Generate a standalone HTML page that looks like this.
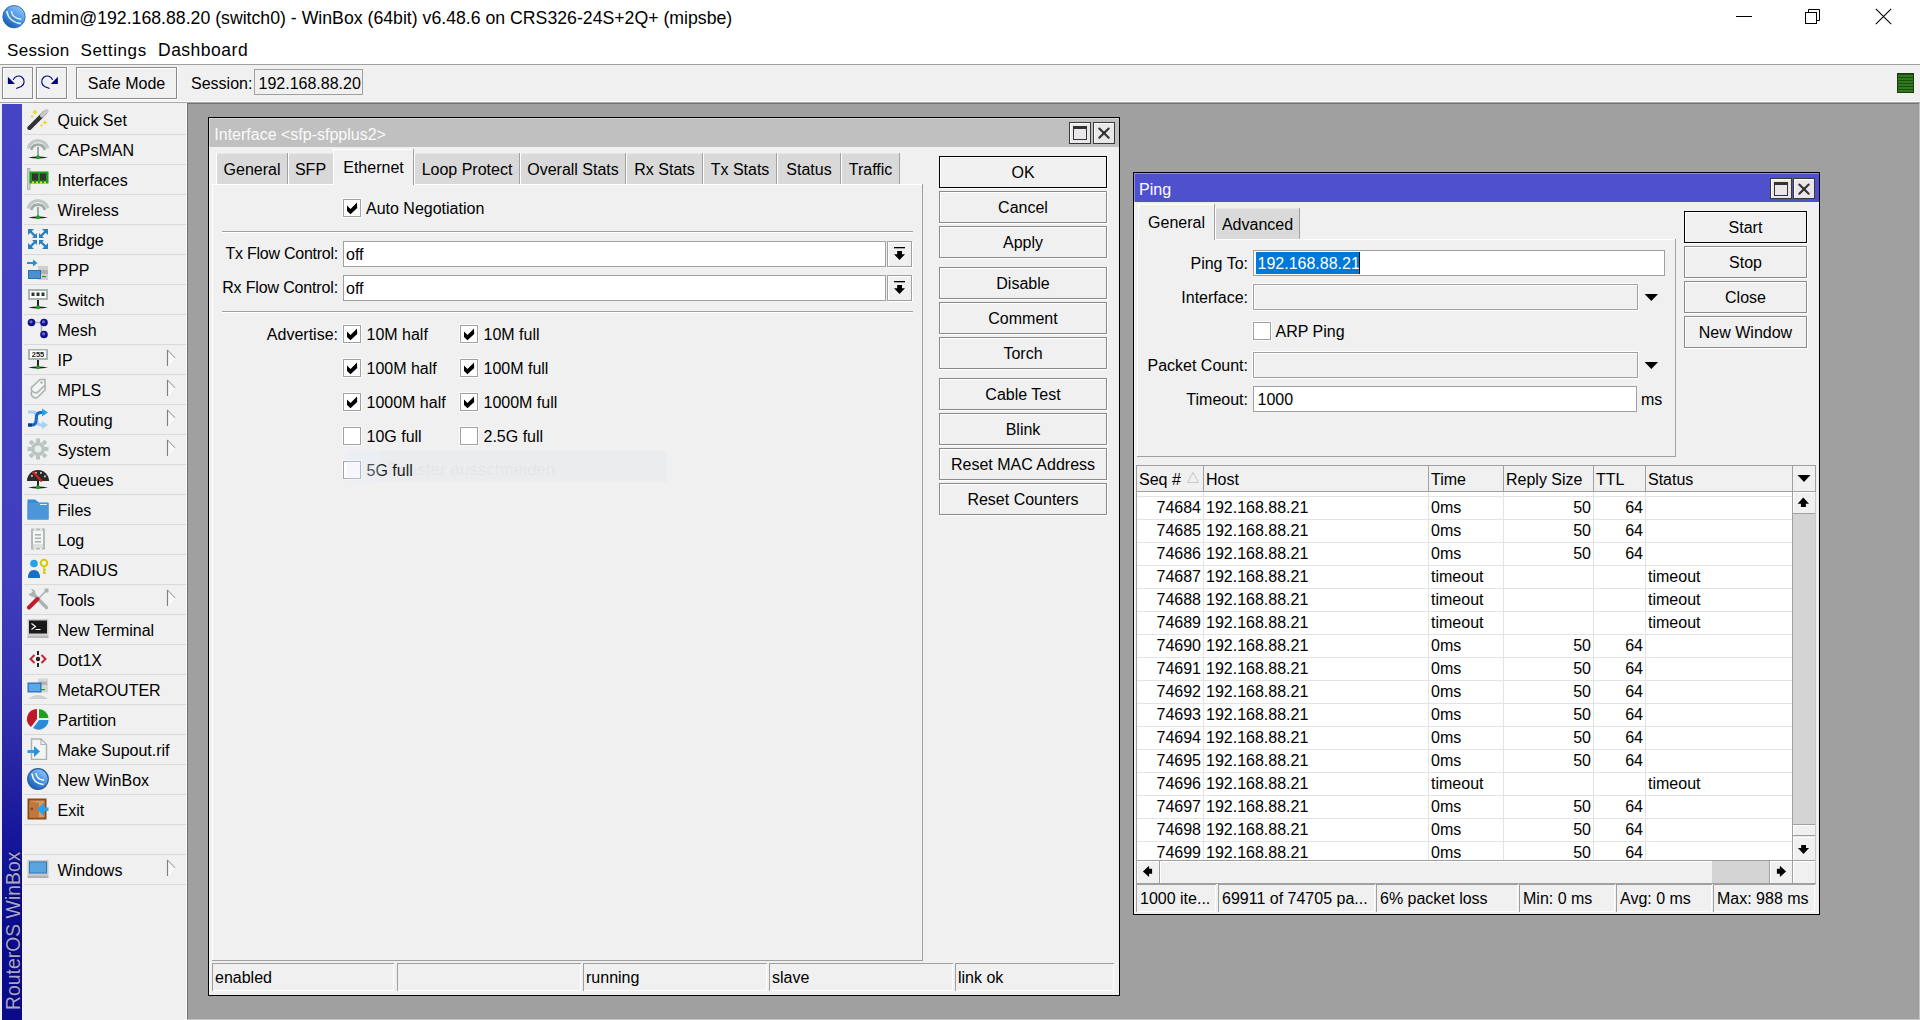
<!DOCTYPE html><html><head><meta charset="utf-8"><style>
html,body{margin:0;padding:0;}
body{width:1920px;height:1020px;position:relative;overflow:hidden;background:#f0f0f0;font-family:"Liberation Sans",sans-serif;}
.t{position:absolute;white-space:pre;font-family:"Liberation Sans",sans-serif;}
.r{position:absolute;}
</style></head><body>
<div class="r" style="left:0px;top:0px;width:1920px;height:64px;background:#fff"></div>
<div class="r" style="left:0px;top:64px;width:1920px;height:1px;background:#a0a0a0"></div>
<svg class="r" style="left:2px;top:5px;" width="25" height="25" viewBox="0 0 25 25"><defs><linearGradient id="lg" x1="0.8" y1="0.1" x2="0.2" y2="0.9"><stop offset="0" stop-color="#8ac2fa"/><stop offset="0.5" stop-color="#4a92e0"/><stop offset="1" stop-color="#1660b8"/></linearGradient></defs>
<circle cx="12" cy="11.7" r="11.2" fill="url(#lg)" stroke="#2a5c9c" stroke-width="0.8"/>
<path d="M4.8 6 Q6.5 17 18.8 18.6" stroke="#fff" stroke-width="1.6" fill="none" opacity="0.85"/>
<path d="M9.4 6 Q10.2 13.5 19.4 14.2" stroke="#fff" stroke-width="1.5" fill="none" opacity="0.8"/></svg>
<div class="t" style="left:31px;top:10.22px;font-size:17.7px;line-height:17.7px;color:#000;">admin@192.168.88.20 (switch0) - WinBox (64bit) v6.48.6 on CRS326-24S+2Q+ (mipsbe)</div>
<div class="r" style="left:1736px;top:16px;width:16px;height:1px;background:#000"></div>
<svg class="r" style="left:1804px;top:8px;" width="18" height="18" viewBox="0 0 18 18"><rect x="1.5" y="4.5" width="11" height="11" fill="none" stroke="#000" stroke-width="1"/><path d="M4.5 4.5 V1.5 H15.5 V12.5 H12.5" fill="none" stroke="#000" stroke-width="1"/></svg>
<svg class="r" style="left:1875px;top:8px;" width="17" height="17" viewBox="0 0 17 17"><path d="M0.8 0.8 L16.2 16.2 M16.2 0.8 L0.8 16.2" stroke="#000" stroke-width="1.1"/></svg>
<div class="t" style="left:7px;top:42.11px;font-size:17px;line-height:17px;color:#000;letter-spacing:0.3px">Session</div>
<div class="t" style="left:80.5px;top:42.11px;font-size:17px;line-height:17px;color:#000;letter-spacing:0.6px">Settings</div>
<div class="t" style="left:158px;top:41.69px;font-size:17.5px;line-height:17.5px;color:#000;letter-spacing:0.5px">Dashboard</div>
<div class="r" style="left:0px;top:65px;width:1920px;height:36px;background:#f0f0f0"></div>
<div class="r" style="left:0px;top:101px;width:1920px;height:1px;background:#fafafa"></div>
<div class="r" style="left:0px;top:102px;width:1920px;height:1px;background:#a8a8a8"></div>
<div class="r" style="left:2px;top:67px;width:32px;height:33px;background:#fff"></div>
<div class="r" style="left:2px;top:67px;width:31px;height:32px;background:#f0f0f0;border:1px solid #8a8a8a;box-sizing:border-box;box-shadow:inset 1px 1px 0 #fff"></div>
<div class="t" style="left:2px;width:31px;top:75.96px;font-size:16px;line-height:16px;color:#000;text-align:center;"></div>
<div class="r" style="left:36px;top:67px;width:32px;height:33px;background:#fff"></div>
<div class="r" style="left:36px;top:67px;width:31px;height:32px;background:#f0f0f0;border:1px solid #8a8a8a;box-sizing:border-box;box-shadow:inset 1px 1px 0 #fff"></div>
<div class="t" style="left:36px;width:31px;top:75.96px;font-size:16px;line-height:16px;color:#000;text-align:center;"></div>
<svg class="r" style="left:2px;top:67px;" width="31" height="32" viewBox="0 0 31 32"><path d="M5.9 9.8 V16.9 H13 Z" fill="#000080"/><path d="M11.2 12.9 A5.6 5.6 0 1 1 19.3 19.5 L14.2 21.5" stroke="#000080" stroke-width="1.1" fill="none"/></svg>
<svg class="r" style="left:36px;top:67px;" width="31" height="32" viewBox="0 0 31 32"><path d="M21.9 9.8 V16.9 H14.8 Z" fill="#000080"/><path d="M16.6 12.9 A5.6 5.6 0 1 0 8.5 19.5 L13.6 21.5" stroke="#000080" stroke-width="1.1" fill="none"/></svg>
<div class="r" style="left:76px;top:67px;width:102px;height:33px;background:#fff"></div>
<div class="r" style="left:76px;top:67px;width:101px;height:32px;background:#f0f0f0;border:1px solid #8a8a8a;box-sizing:border-box;box-shadow:inset 1px 1px 0 #fff"></div>
<div class="t" style="left:76px;width:101px;top:76.16px;font-size:16px;line-height:16px;color:#000;text-align:center;">Safe Mode</div>
<div class="t" style="left:191px;top:76.16px;font-size:16px;line-height:16px;color:#000;">Session:</div>
<div class="r" style="left:254px;top:69px;width:109px;height:26px;border:1px solid #a0a0a0;box-sizing:border-box;background:#f0f0f0"></div>
<div class="t" style="left:258.5px;top:76.16px;font-size:16px;line-height:16px;color:#000;">192.168.88.20</div>
<svg class="r" style="left:1897px;top:73px;" width="17" height="20" viewBox="0 0 17 20"><rect width="17" height="20" fill="#2f7a1c"/><rect x="0" y="1" width="17" height="1" fill="#1d4d10"/><rect x="0" y="4" width="17" height="1" fill="#1d4d10"/><rect x="0" y="7" width="17" height="1" fill="#1d4d10"/><rect x="0" y="10" width="17" height="1" fill="#1d4d10"/><rect x="0" y="13" width="17" height="1" fill="#1d4d10"/><rect x="0" y="16" width="17" height="1" fill="#1d4d10"/><rect x="0" y="19" width="17" height="1" fill="#1d4d10"/><rect x="0.5" y="0.5" width="16" height="19" fill="none" stroke="#1a3d0c"/></svg>
<div class="r" style="left:0px;top:103px;width:187px;height:917px;background:#f0f0f0"></div>
<div class="r" style="left:186px;top:103px;width:1px;height:917px;background:#fbfbfb"></div>
<div class="r" style="left:2px;top:104px;width:20px;height:916px;background:linear-gradient(to bottom,#4444c4 0%,#3e3ebe 52%,#3434b2 63%,#2828a6 71%,#16169a 80%,#0c0c8e 90%,#0a0a8a 100%)"></div>
<div class="t" style="left:-72px;top:915px;width:170px;height:20px;font-size:19.4px;line-height:20px;color:#a6a6cc;text-shadow:1px 1px 1px #00004a;transform:rotate(-90deg);transform-origin:center;text-align:left">RouterOS WinBox</div>
<div class="r" style="left:24px;top:134px;width:162px;height:1px;background:#d9d9d9"></div>
<svg class="r" style="left:27px;top:108px;" width="22" height="22" viewBox="0 0 22 22"><path d="M2.5 20 L18 4.5" stroke="#333" stroke-width="4.4" stroke-linecap="round"/>
<path d="M15 7.5 L19.5 3" stroke="#c8c8c8" stroke-width="4" stroke-linecap="round"/>
<path d="M8 1 L9 3.2 L11.3 4 L9 4.8 L8 7 L7 4.8 L4.7 4 L7 3.2 Z" fill="#e6d81a"/>
<path d="M18 12 L18.8 13.8 L20.8 14.5 L18.8 15.2 L18 17 L17.2 15.2 L15.2 14.5 L17.2 13.8 Z" fill="#e6d81a"/>
<rect x="4" y="7.5" width="2" height="2" fill="#e6d81a"/><rect x="13.5" y="16.5" width="2" height="2" fill="#e6d81a"/></svg>
<div class="t" style="left:57.5px;top:113.46px;font-size:16px;line-height:16px;color:#000;">Quick Set</div>
<div class="r" style="left:24px;top:164px;width:162px;height:1px;background:#d9d9d9"></div>
<svg class="r" style="left:27px;top:138px;" width="22" height="22" viewBox="0 0 22 22"><path d="M1.2 10.5 A10 10 0 0 1 20.8 10.5" stroke="#c0c8c6" stroke-width="3.2" fill="none"/>
<path d="M4.2 12 A7 7 0 0 1 17.8 12" stroke="#9eaaa6" stroke-width="2.6" fill="none"/>
<rect x="10" y="9" width="2" height="10" fill="#9aa8a4"/>
<path d="M1 19.5 Q11 17.5 21 19.5 Q11 21.5 1 19.5Z" fill="#222"/>
<circle cx="11" cy="19.3" r="2" fill="#1aa01a"/></svg>
<div class="t" style="left:57.5px;top:143.46px;font-size:16px;line-height:16px;color:#000;">CAPsMAN</div>
<div class="r" style="left:24px;top:194px;width:162px;height:1px;background:#d9d9d9"></div>
<svg class="r" style="left:27px;top:168px;" width="22" height="22" viewBox="0 0 22 22"><rect x="0.5" y="0.5" width="2.5" height="21" fill="#c8d0cc" stroke="#a0aaa6" stroke-width="0.8"/>
<rect x="2.5" y="3.5" width="19" height="12" fill="#1e9a1e"/>
<rect x="5" y="5.5" width="6" height="7" fill="#333"/><rect x="13" y="5.5" width="6" height="7" fill="#333"/>
<rect x="5" y="13.5" width="2" height="2" fill="#f0e020"/><rect x="9" y="13.5" width="2" height="2" fill="#f0e020"/><rect x="13" y="13.5" width="2" height="2" fill="#f0e020"/><rect x="17" y="13.5" width="2" height="2" fill="#f0e020"/></svg>
<div class="t" style="left:57.5px;top:173.46px;font-size:16px;line-height:16px;color:#000;">Interfaces</div>
<div class="r" style="left:24px;top:224px;width:162px;height:1px;background:#d9d9d9"></div>
<svg class="r" style="left:27px;top:198px;" width="22" height="22" viewBox="0 0 22 22"><path d="M1.2 10.5 A10 10 0 0 1 20.8 10.5" stroke="#c0c8c6" stroke-width="3.2" fill="none"/>
<path d="M4.2 12 A7 7 0 0 1 17.8 12" stroke="#9eaaa6" stroke-width="2.6" fill="none"/>
<rect x="10" y="9" width="2" height="10" fill="#9aa8a4"/>
<path d="M1 19.5 Q11 17.5 21 19.5 Q11 21.5 1 19.5Z" fill="#222"/>
<circle cx="11" cy="19.3" r="2" fill="#1aa01a"/></svg>
<div class="t" style="left:57.5px;top:203.46px;font-size:16px;line-height:16px;color:#000;">Wireless</div>
<div class="r" style="left:24px;top:254px;width:162px;height:1px;background:#d9d9d9"></div>
<svg class="r" style="left:27px;top:228px;" width="22" height="22" viewBox="0 0 22 22"><g stroke="#2a7fc0" stroke-width="2.4" fill="none"><path d="M2 2 L9 9"/><path d="M20 2 L13 9"/><path d="M2 20 L9 13"/><path d="M20 20 L13 13"/></g>
<g fill="#2a7fc0"><path d="M1 1 H7 L1 7Z"/><path d="M21 1 V7 L15 1Z"/><path d="M10 10 H5 L10 5Z"/><path d="M12 10 V5 L17 10Z"/><path d="M10 12 V17 L5 12Z"/><path d="M12 12 H17 L12 17Z"/><path d="M1 21 V15 L7 21Z"/><path d="M21 21 H15 L21 15Z"/></g></svg>
<div class="t" style="left:57.5px;top:233.46px;font-size:16px;line-height:16px;color:#000;">Bridge</div>
<div class="r" style="left:24px;top:284px;width:162px;height:1px;background:#d9d9d9"></div>
<svg class="r" style="left:27px;top:258px;" width="22" height="22" viewBox="0 0 22 22"><rect x="11" y="8" width="10" height="14" fill="#cfcfcf"/><rect x="13" y="12" width="8" height="4" fill="#b0b0b0"/><rect x="15" y="18" width="4" height="1.2" fill="#20a020"/>
<rect x="1.5" y="12.5" width="12" height="8" fill="#4a90d0" stroke="#2a70b0"/>
<path d="M0 5 H7" stroke="#2a8fd0" stroke-width="2"/><path d="M6 1.5 L10.5 5 L6 8.5Z" fill="#2a8fd0"/></svg>
<div class="t" style="left:57.5px;top:263.46px;font-size:16px;line-height:16px;color:#000;">PPP</div>
<div class="r" style="left:24px;top:314px;width:162px;height:1px;background:#d9d9d9"></div>
<svg class="r" style="left:27px;top:288px;" width="22" height="22" viewBox="0 0 22 22"><rect x="1" y="1" width="20" height="11" fill="#a8b4b0"/><rect x="3" y="3" width="16" height="7" fill="#fff"/>
<rect x="4.5" y="4.5" width="3" height="3.5" fill="#333"/><rect x="9.5" y="4.5" width="3" height="3.5" fill="#333"/><rect x="14.5" y="4.5" width="3" height="3.5" fill="#333"/>
<rect x="10" y="12" width="2" height="7" fill="#222"/>
<path d="M1 19.5 Q11 17.5 21 19.5 Q11 21.5 1 19.5Z" fill="#222"/><circle cx="11" cy="19.3" r="2" fill="#1aa01a"/></svg>
<div class="t" style="left:57.5px;top:293.46px;font-size:16px;line-height:16px;color:#000;">Switch</div>
<div class="r" style="left:24px;top:344px;width:162px;height:1px;background:#d9d9d9"></div>
<svg class="r" style="left:27px;top:318px;" width="22" height="22" viewBox="0 0 22 22"><path d="M4.5 4.5 H14.5 V16.5" stroke="#a8b4b0" stroke-width="1.6" fill="none"/>
<circle cx="4.5" cy="4.5" r="3.8" fill="#10108a"/><circle cx="17" cy="4.5" r="3.8" fill="#10108a"/><circle cx="17" cy="16.5" r="3.8" fill="#10108a"/>
<circle cx="4" cy="3.8" r="1.6" fill="#6a6ad0"/><circle cx="16.5" cy="3.8" r="1.6" fill="#6a6ad0"/><circle cx="16.5" cy="15.8" r="1.6" fill="#6a6ad0"/></svg>
<div class="t" style="left:57.5px;top:323.46px;font-size:16px;line-height:16px;color:#000;">Mesh</div>
<div class="r" style="left:24px;top:374px;width:162px;height:1px;background:#d9d9d9"></div>
<svg class="r" style="left:27px;top:348px;" width="22" height="22" viewBox="0 0 22 22"><rect x="1" y="1" width="20" height="11" fill="#a8b4b0"/><rect x="3" y="2.5" width="16" height="7.5" fill="#fff"/>
<text x="11" y="9.3" font-family="Liberation Sans" font-size="7.5" font-weight="bold" text-anchor="middle" fill="#222">255</text>
<rect x="10" y="12" width="2" height="7" fill="#222"/>
<path d="M1 19.5 Q11 17.5 21 19.5 Q11 21.5 1 19.5Z" fill="#222"/><circle cx="11" cy="19.3" r="2" fill="#1aa01a"/></svg>
<div class="t" style="left:57.5px;top:353.46px;font-size:16px;line-height:16px;color:#000;">IP</div>
<svg class="r" style="left:166px;top:349px;" width="12" height="19" viewBox="0 0 12 19"><path d="M1.5 1 L9 8.8 L1.5 17 Z" fill="#f8f8f8"/><path d="M1.5 17 L9 8.8" stroke="#fff" stroke-width="1"/><path d="M1.5 1 L9 8.8" stroke="#858585" stroke-width="0.95"/><path d="M1.5 0.8 V17" stroke="#808080" stroke-width="1.2"/></svg>
<div class="r" style="left:24px;top:404px;width:162px;height:1px;background:#d9d9d9"></div>
<svg class="r" style="left:27px;top:378px;" width="22" height="22" viewBox="0 0 22 22"><path d="M6 8 L13 1.5 H18 V7 L11 14 Q8 16 5 13 Q3 10 6 8Z" fill="#f4f4f4" stroke="#a8b4b0" stroke-width="1.6"/>
<path d="M5 13 Q3 16 6 19 Q9 21 11 19 L18 12 V7" fill="none" stroke="#a8b4b0" stroke-width="1.6"/><circle cx="14.5" cy="4.5" r="1.2" fill="#a8b4b0"/></svg>
<div class="t" style="left:57.5px;top:383.46px;font-size:16px;line-height:16px;color:#000;">MPLS</div>
<svg class="r" style="left:166px;top:379px;" width="12" height="19" viewBox="0 0 12 19"><path d="M1.5 1 L9 8.8 L1.5 17 Z" fill="#f8f8f8"/><path d="M1.5 17 L9 8.8" stroke="#fff" stroke-width="1"/><path d="M1.5 1 L9 8.8" stroke="#858585" stroke-width="0.95"/><path d="M1.5 0.8 V17" stroke="#808080" stroke-width="1.2"/></svg>
<div class="r" style="left:24px;top:434px;width:162px;height:1px;background:#d9d9d9"></div>
<svg class="r" style="left:27px;top:408px;" width="22" height="22" viewBox="0 0 22 22"><path d="M1 4 H6 Q9 4 9.5 8 L10 13 Q10.5 17 14 17 H16" stroke="#a8d0f0" stroke-width="3" fill="none"/><path d="M15 13 L21 17 L15 21Z" fill="#a8d0f0"/>
<path d="M1 17 H5 Q8.5 17 9 13 L9.5 8 Q10 4.5 14 4.5 H16" stroke="#1a68c0" stroke-width="3" fill="none"/><path d="M15 0.5 L21 4.5 L15 8.5Z" fill="#2aa0e8"/>
<path d="M1 17 H5" stroke="#0a3a8a" stroke-width="3"/></svg>
<div class="t" style="left:57.5px;top:413.46px;font-size:16px;line-height:16px;color:#000;">Routing</div>
<svg class="r" style="left:166px;top:409px;" width="12" height="19" viewBox="0 0 12 19"><path d="M1.5 1 L9 8.8 L1.5 17 Z" fill="#f8f8f8"/><path d="M1.5 17 L9 8.8" stroke="#fff" stroke-width="1"/><path d="M1.5 1 L9 8.8" stroke="#858585" stroke-width="0.95"/><path d="M1.5 0.8 V17" stroke="#808080" stroke-width="1.2"/></svg>
<div class="r" style="left:24px;top:464px;width:162px;height:1px;background:#d9d9d9"></div>
<svg class="r" style="left:27px;top:438px;" width="22" height="22" viewBox="0 0 22 22"><g fill="#b8c4c0"><circle cx="11" cy="11" r="7"/>
<rect x="9" y="0.5" width="4" height="4"/><rect x="9" y="17.5" width="4" height="4"/><rect x="0.5" y="9" width="4" height="4"/><rect x="17.5" y="9" width="4" height="4"/>
<rect x="2.5" y="2.5" width="4" height="4" transform="rotate(45 4.5 4.5)"/><rect x="15.5" y="2.5" width="4" height="4" transform="rotate(45 17.5 4.5)"/><rect x="2.5" y="15.5" width="4" height="4" transform="rotate(45 4.5 17.5)"/><rect x="15.5" y="15.5" width="4" height="4" transform="rotate(45 17.5 17.5)"/></g>
<circle cx="11" cy="11" r="3.6" fill="#e8eeec"/></svg>
<div class="t" style="left:57.5px;top:443.46px;font-size:16px;line-height:16px;color:#000;">System</div>
<svg class="r" style="left:166px;top:439px;" width="12" height="19" viewBox="0 0 12 19"><path d="M1.5 1 L9 8.8 L1.5 17 Z" fill="#f8f8f8"/><path d="M1.5 17 L9 8.8" stroke="#fff" stroke-width="1"/><path d="M1.5 1 L9 8.8" stroke="#858585" stroke-width="0.95"/><path d="M1.5 0.8 V17" stroke="#808080" stroke-width="1.2"/></svg>
<div class="r" style="left:24px;top:494px;width:162px;height:1px;background:#d9d9d9"></div>
<svg class="r" style="left:27px;top:468px;" width="22" height="22" viewBox="0 0 22 22"><path d="M0 13 A11 11 0 0 1 22 13 Z" fill="#2a2a2a"/>
<rect x="4" y="7" width="1.8" height="1.8" fill="#ccc"/><rect x="8" y="4" width="1.8" height="1.8" fill="#ccc"/><rect x="13" y="4" width="1.8" height="1.8" fill="#ccc"/><rect x="17" y="7.5" width="1.8" height="1.8" fill="#ccc"/>
<path d="M5.5 3.5 L15 13.5" stroke="#d02020" stroke-width="2.4"/>
<rect x="10" y="13" width="2" height="5" fill="#222"/>
<path d="M1 19.5 Q11 17.5 21 19.5 Q11 21.5 1 19.5Z" fill="#222"/><circle cx="11" cy="19.3" r="2" fill="#1aa01a"/></svg>
<div class="t" style="left:57.5px;top:473.46px;font-size:16px;line-height:16px;color:#000;">Queues</div>
<div class="r" style="left:24px;top:524px;width:162px;height:1px;background:#d9d9d9"></div>
<svg class="r" style="left:27px;top:498px;" width="22" height="22" viewBox="0 0 22 22"><path d="M0.5 1.5 H8 L12 4.5 H21.5 V21.5 H0.5Z" fill="#3a8ad0"/><path d="M0.5 5 H21.5 V21.5 H0.5Z" fill="#4a96d8"/><rect x="13" y="6" width="7" height="1" fill="#e8f0f8"/></svg>
<div class="t" style="left:57.5px;top:503.46px;font-size:16px;line-height:16px;color:#000;">Files</div>
<div class="r" style="left:24px;top:554px;width:162px;height:1px;background:#d9d9d9"></div>
<svg class="r" style="left:27px;top:528px;" width="22" height="22" viewBox="0 0 22 22"><rect x="4" y="0.5" width="14" height="21" fill="#b0bcb8"/><rect x="6" y="2.5" width="10" height="17" fill="#f4f6f5"/>
<rect x="7" y="0.5" width="2" height="1.5" fill="#f0f0f0"/><rect x="13" y="0.5" width="2" height="1.5" fill="#f0f0f0"/><rect x="7" y="20" width="2" height="1.5" fill="#f0f0f0"/><rect x="13" y="20" width="2" height="1.5" fill="#f0f0f0"/>
<rect x="8" y="6" width="6" height="1.6" fill="#a8b4b0"/><rect x="8" y="9.5" width="6" height="1.6" fill="#a8b4b0"/><rect x="8" y="13" width="6" height="1.6" fill="#a8b4b0"/><rect x="6" y="16" width="10" height="3.5" fill="#dde2e0"/></svg>
<div class="t" style="left:57.5px;top:533.46px;font-size:16px;line-height:16px;color:#000;">Log</div>
<div class="r" style="left:24px;top:584px;width:162px;height:1px;background:#d9d9d9"></div>
<svg class="r" style="left:27px;top:558px;" width="22" height="22" viewBox="0 0 22 22"><circle cx="7" cy="5.5" r="3.8" fill="#2aa0e8"/><path d="M1 20 Q1 12 7 12 Q13 12 13 20Z" fill="#1a70c0"/>
<circle cx="17" cy="5" r="3.3" fill="none" stroke="#d8c800" stroke-width="2"/><path d="M17 8 V16 M17 12 H19 M17 15 H19" stroke="#d8c800" stroke-width="1.6"/></svg>
<div class="t" style="left:57.5px;top:563.46px;font-size:16px;line-height:16px;color:#000;">RADIUS</div>
<div class="r" style="left:24px;top:614px;width:162px;height:1px;background:#d9d9d9"></div>
<svg class="r" style="left:27px;top:588px;" width="22" height="22" viewBox="0 0 22 22"><path d="M10 12 L19.5 2.5" stroke="#a8b4b0" stroke-width="1.6"/><rect x="17.5" y="0.5" width="4" height="4" fill="#a8b4b0"/>
<path d="M6 6 L19.5 19.5" stroke="#a8b4b0" stroke-width="3.4" stroke-linecap="round"/>
<path d="M1.5 5.5 A4.5 4.5 0 0 0 7.5 8.5 L8.5 6 A4.5 4.5 0 0 0 4 0.8 L5.8 3.6 L3.6 5.4 Z" fill="#a8b4b0"/>
<path d="M2 19.5 L10.5 11" stroke="#c01c2c" stroke-width="4" stroke-linecap="round"/></svg>
<div class="t" style="left:57.5px;top:593.46px;font-size:16px;line-height:16px;color:#000;">Tools</div>
<svg class="r" style="left:166px;top:589px;" width="12" height="19" viewBox="0 0 12 19"><path d="M1.5 1 L9 8.8 L1.5 17 Z" fill="#f8f8f8"/><path d="M1.5 17 L9 8.8" stroke="#fff" stroke-width="1"/><path d="M1.5 1 L9 8.8" stroke="#858585" stroke-width="0.95"/><path d="M1.5 0.8 V17" stroke="#808080" stroke-width="1.2"/></svg>
<div class="r" style="left:24px;top:644px;width:162px;height:1px;background:#d9d9d9"></div>
<svg class="r" style="left:27px;top:618px;" width="22" height="22" viewBox="0 0 22 22"><rect x="0.5" y="1" width="21" height="17" fill="#cfcfcf"/><rect x="2" y="2.5" width="18" height="13" fill="#1a1a1a"/>
<path d="M4.5 5.5 L8.5 8.5 L4.5 11.5" stroke="#fff" stroke-width="1.1" fill="none"/><rect x="8.5" y="11" width="5" height="1" fill="#fff"/><rect x="0.5" y="18" width="21" height="2" fill="#b8b8b8"/></svg>
<div class="t" style="left:57.5px;top:623.46px;font-size:16px;line-height:16px;color:#000;">New Terminal</div>
<div class="r" style="left:24px;top:674px;width:162px;height:1px;background:#d9d9d9"></div>
<svg class="r" style="left:27px;top:648px;" width="22" height="22" viewBox="0 0 22 22"><rect x="10" y="3" width="2" height="4" fill="#222"/><rect x="10" y="15" width="2" height="4" fill="#222"/><circle cx="11" cy="11" r="2.2" fill="#222"/>
<path d="M7.5 7 L3.5 11 L7.5 15" stroke="#c02838" stroke-width="2" fill="none"/><path d="M14.5 7 L18.5 11 L14.5 15" stroke="#c02838" stroke-width="2" fill="none"/></svg>
<div class="t" style="left:57.5px;top:653.46px;font-size:16px;line-height:16px;color:#000;">Dot1X</div>
<div class="r" style="left:24px;top:704px;width:162px;height:1px;background:#d9d9d9"></div>
<svg class="r" style="left:27px;top:678px;" width="22" height="22" viewBox="0 0 22 22"><rect x="11" y="0.5" width="10" height="14" fill="#d6d6d6"/><rect x="12" y="3.5" width="8" height="3.5" fill="#b4b4b4"/><rect x="14" y="11" width="4" height="1.2" fill="#20a020"/>
<rect x="0.5" y="4.5" width="14" height="10" fill="#2a70b8"/><rect x="1.8" y="5.8" width="11.4" height="7.4" fill="#5aa8e8"/>
<path d="M1 21 Q11 13 21 21Z" fill="#d0d0d0"/></svg>
<div class="t" style="left:57.5px;top:683.46px;font-size:16px;line-height:16px;color:#000;">MetaROUTER</div>
<div class="r" style="left:24px;top:734px;width:162px;height:1px;background:#d9d9d9"></div>
<svg class="r" style="left:27px;top:708px;" width="22" height="22" viewBox="0 0 22 22"><path d="M10 1 A10 10 0 0 0 4 19 L10 11Z" fill="#c01828"/><path d="M12 1 A10 10 0 0 1 21.5 10 H12Z" fill="#20a020"/><path d="M6 20 L12 12 H21.5 A10 10 0 0 1 6 20Z" fill="#2a8ad8"/></svg>
<div class="t" style="left:57.5px;top:713.46px;font-size:16px;line-height:16px;color:#000;">Partition</div>
<div class="r" style="left:24px;top:764px;width:162px;height:1px;background:#d9d9d9"></div>
<svg class="r" style="left:27px;top:738px;" width="22" height="22" viewBox="0 0 22 22"><path d="M4.5 1 H14 L19.5 6.5 V21.5 H4.5Z" fill="#f4f4f4" stroke="#a8b4b0" stroke-width="1.4"/><path d="M14 1 V6.5 H19.5" fill="none" stroke="#a8b4b0" stroke-width="1.2"/>
<rect x="0.5" y="12" width="7" height="3" fill="#2aa0e8"/><path d="M7 8 L13 13.5 L7 19Z" fill="#2a90d8"/></svg>
<div class="t" style="left:57.5px;top:743.46px;font-size:16px;line-height:16px;color:#000;">Make Supout.rif</div>
<div class="r" style="left:24px;top:794px;width:162px;height:1px;background:#d9d9d9"></div>
<svg class="r" style="left:27px;top:768px;" width="22" height="22" viewBox="0 0 22 22"><defs><linearGradient id="nwg" x1="0.8" y1="0.1" x2="0.2" y2="0.9"><stop offset="0" stop-color="#8ac2fa"/><stop offset="0.5" stop-color="#4a92e0"/><stop offset="1" stop-color="#1660b8"/></linearGradient></defs>
<circle cx="11" cy="11" r="10.3" fill="url(#nwg)" stroke="#2a5c9c" stroke-width="1.2"/>
<path d="M5 5.5 Q6 15.5 16.5 16.5" stroke="#fff" stroke-width="1.6" fill="none"/><path d="M9 5 Q9.5 11.5 17 12.2" stroke="#fff" stroke-width="1.4" fill="none"/></svg>
<div class="t" style="left:57.5px;top:773.46px;font-size:16px;line-height:16px;color:#000;">New WinBox</div>
<div class="r" style="left:24px;top:824px;width:162px;height:1px;background:#d9d9d9"></div>
<svg class="r" style="left:27px;top:798px;" width="22" height="22" viewBox="0 0 22 22"><rect x="0.5" y="0.5" width="19" height="21" fill="#8a4a1a"/><rect x="2.5" y="2.5" width="15" height="17" fill="#d89a60"/><path d="M3 3 L12 5 V19 L3 19Z" fill="#c07840"/><circle cx="4.8" cy="11" r="1.4" fill="#8a4a1a"/>
<rect x="11" y="9.5" width="10.5" height="3.5" fill="#2aa0e8"/><path d="M17 4.5 L10 11.2 L17 18Z" fill="#2aa0e8"/></svg>
<div class="t" style="left:57.5px;top:803.46px;font-size:16px;line-height:16px;color:#000;">Exit</div>
<div class="r" style="left:24px;top:854px;width:162px;height:1px;background:#d9d9d9"></div>
<div class="r" style="left:24px;top:884px;width:162px;height:1px;background:#d9d9d9"></div>
<svg class="r" style="left:27px;top:858px;" width="22" height="22" viewBox="0 0 22 22"><rect x="0.5" y="2" width="21" height="16" fill="#c8c8c8"/><rect x="2" y="3.5" width="18" height="12" fill="#2a78c0"/><rect x="3" y="4.5" width="16" height="10" fill="#5aa4e0"/><rect x="0.5" y="18" width="21" height="2" fill="#b0b0b0"/></svg>
<div class="t" style="left:57.5px;top:863.46px;font-size:16px;line-height:16px;color:#000;">Windows</div>
<svg class="r" style="left:166px;top:859px;" width="12" height="19" viewBox="0 0 12 19"><path d="M1.5 1 L9 8.8 L1.5 17 Z" fill="#f8f8f8"/><path d="M1.5 17 L9 8.8" stroke="#fff" stroke-width="1"/><path d="M1.5 1 L9 8.8" stroke="#858585" stroke-width="0.95"/><path d="M1.5 0.8 V17" stroke="#808080" stroke-width="1.2"/></svg>
<div class="r" style="left:187px;top:103px;width:1732px;height:916px;background:#a0a0a0"></div>
<div class="r" style="left:187px;top:103px;width:1732px;height:1px;background:#727272"></div>
<div class="r" style="left:187px;top:103px;width:1px;height:916px;background:#727272"></div>
<div class="r" style="left:187px;top:1019px;width:1733px;height:1px;background:#c4c4c4"></div>
<div class="r" style="left:1919px;top:103px;width:1px;height:917px;background:#c4c4c4"></div>
<div class="r" style="left:208px;top:117px;width:912px;height:879px;background:#000"></div>
<div class="r" style="left:209px;top:118px;width:910px;height:877px;background:#f0f0f0"></div>
<div class="r" style="left:209px;top:118px;width:910px;height:29px;background:#c0c0c0"></div>
<div class="r" style="left:209px;top:118px;width:910px;height:1px;background:rgba(255,255,255,0.35)"></div>
<div class="r" style="left:209px;top:119px;width:1px;height:28px;background:rgba(255,255,255,0.35)"></div>
<div class="r" style="left:209px;top:147px;width:1px;height:848px;background:#f8f8f8"></div>
<div class="t" style="left:214.3px;top:127.46px;font-size:16px;line-height:16px;color:#fafafa;">Interface &lt;sfp-sfpplus2&gt;</div>
<div class="r" style="left:1069px;top:122px;width:22px;height:22px;background:#e9e7e9;border:1px solid #383838;box-sizing:border-box;box-shadow:inset 1px 1px 0 #fff"></div>
<div class="r" style="left:1093px;top:122px;width:22px;height:22px;background:#e9e7e9;border:1px solid #383838;box-sizing:border-box;box-shadow:inset 1px 1px 0 #fff"></div>
<svg class="r" style="left:1069px;top:122px;" width="22" height="22" viewBox="0 0 22 22"><rect x="4.5" y="4.5" width="13" height="13" fill="none" stroke="#333" stroke-width="1"/><rect x="4" y="4" width="14" height="3" fill="#333"/></svg>
<svg class="r" style="left:1093px;top:122px;" width="22" height="22" viewBox="0 0 22 22"><path d="M6.3 6.5 L15.7 15.7 M15.7 6.5 L6.3 15.7" stroke="#333" stroke-width="2.1" stroke-linecap="round"/><rect x="9.5" y="9.6" width="3" height="3" fill="#333"/></svg>
<div class="r" style="left:212px;top:184px;width:711px;height:777px;background:#f0f0f0"></div>
<div class="r" style="left:212px;top:184px;width:711px;height:1px;background:#fff"></div>
<div class="r" style="left:212px;top:184px;width:1px;height:777px;background:#fff"></div>
<div class="r" style="left:922px;top:184px;width:1px;height:777px;background:#a0a0a0"></div>
<div class="r" style="left:212px;top:960px;width:711px;height:1px;background:#a0a0a0"></div>
<div class="r" style="left:216px;top:153px;width:72px;height:31px;background:#d9d9d9"></div>
<div class="r" style="left:216px;top:153px;width:72px;height:1px;background:#e6e6e6"></div>
<div class="r" style="left:216px;top:153px;width:1px;height:31px;background:#fff"></div>
<div class="r" style="left:287px;top:153px;width:1px;height:31px;background:#a0a0a0"></div>
<div class="t" style="left:216px;width:72px;top:162.46px;font-size:16px;line-height:16px;color:#000;text-align:center;">General</div>
<div class="r" style="left:288px;top:153px;width:45px;height:31px;background:#d9d9d9"></div>
<div class="r" style="left:288px;top:153px;width:45px;height:1px;background:#e6e6e6"></div>
<div class="r" style="left:288px;top:153px;width:1px;height:31px;background:#fff"></div>
<div class="t" style="left:288px;width:45px;top:162.46px;font-size:16px;line-height:16px;color:#000;text-align:center;">SFP</div>
<div class="r" style="left:333px;top:149px;width:81px;height:36px;background:#f0f0f0"></div>
<div class="r" style="left:333px;top:149px;width:81px;height:1px;background:#fff"></div>
<div class="r" style="left:333px;top:149px;width:1px;height:36px;background:#fff"></div>
<div class="r" style="left:413px;top:149px;width:1px;height:36px;background:#a0a0a0"></div>
<div class="t" style="left:333px;width:81px;top:160.46px;font-size:16px;line-height:16px;color:#000;text-align:center;">Ethernet</div>
<div class="r" style="left:414px;top:153px;width:106px;height:31px;background:#d9d9d9"></div>
<div class="r" style="left:414px;top:153px;width:106px;height:1px;background:#e6e6e6"></div>
<div class="r" style="left:414px;top:153px;width:1px;height:31px;background:#fff"></div>
<div class="r" style="left:519px;top:153px;width:1px;height:31px;background:#a0a0a0"></div>
<div class="t" style="left:414px;width:106px;top:162.46px;font-size:16px;line-height:16px;color:#000;text-align:center;">Loop Protect</div>
<div class="r" style="left:520px;top:153px;width:106px;height:31px;background:#d9d9d9"></div>
<div class="r" style="left:520px;top:153px;width:106px;height:1px;background:#e6e6e6"></div>
<div class="r" style="left:520px;top:153px;width:1px;height:31px;background:#fff"></div>
<div class="r" style="left:625px;top:153px;width:1px;height:31px;background:#a0a0a0"></div>
<div class="t" style="left:520px;width:106px;top:162.46px;font-size:16px;line-height:16px;color:#000;text-align:center;">Overall Stats</div>
<div class="r" style="left:626px;top:153px;width:77px;height:31px;background:#d9d9d9"></div>
<div class="r" style="left:626px;top:153px;width:77px;height:1px;background:#e6e6e6"></div>
<div class="r" style="left:626px;top:153px;width:1px;height:31px;background:#fff"></div>
<div class="r" style="left:702px;top:153px;width:1px;height:31px;background:#a0a0a0"></div>
<div class="t" style="left:626px;width:77px;top:162.46px;font-size:16px;line-height:16px;color:#000;text-align:center;">Rx Stats</div>
<div class="r" style="left:703px;top:153px;width:74px;height:31px;background:#d9d9d9"></div>
<div class="r" style="left:703px;top:153px;width:74px;height:1px;background:#e6e6e6"></div>
<div class="r" style="left:703px;top:153px;width:1px;height:31px;background:#fff"></div>
<div class="r" style="left:776px;top:153px;width:1px;height:31px;background:#a0a0a0"></div>
<div class="t" style="left:703px;width:74px;top:162.46px;font-size:16px;line-height:16px;color:#000;text-align:center;">Tx Stats</div>
<div class="r" style="left:777px;top:153px;width:64px;height:31px;background:#d9d9d9"></div>
<div class="r" style="left:777px;top:153px;width:64px;height:1px;background:#e6e6e6"></div>
<div class="r" style="left:777px;top:153px;width:1px;height:31px;background:#fff"></div>
<div class="r" style="left:840px;top:153px;width:1px;height:31px;background:#a0a0a0"></div>
<div class="t" style="left:777px;width:64px;top:162.46px;font-size:16px;line-height:16px;color:#000;text-align:center;">Status</div>
<div class="r" style="left:841px;top:153px;width:59px;height:31px;background:#d9d9d9"></div>
<div class="r" style="left:841px;top:153px;width:59px;height:1px;background:#e6e6e6"></div>
<div class="r" style="left:841px;top:153px;width:1px;height:31px;background:#fff"></div>
<div class="r" style="left:899px;top:153px;width:1px;height:31px;background:#a0a0a0"></div>
<div class="t" style="left:841px;width:59px;top:162.46px;font-size:16px;line-height:16px;color:#000;text-align:center;">Traffic</div>
<div class="r" style="left:334px;top:184px;width:79px;height:1px;background:#f0f0f0"></div>
<div class="r" style="left:343px;top:199px;width:18px;height:18px;background:#fff;border:1px solid #a0a0a0;box-sizing:border-box;box-shadow:0 0 0 1px #fcfcfc"></div>
<svg class="r" style="left:343px;top:199px;" width="18" height="18" viewBox="0 0 18 18"><path d="M4 6.6 L7.5 10 L14 3.4 L14.2 9 L7.5 15.2 L4 12 Z" fill="#000"/></svg>
<div class="t" style="left:366px;top:200.96px;font-size:16px;line-height:16px;color:#000;">Auto Negotiation</div>
<div class="r" style="left:222px;top:231px;width:691px;height:1px;background:#a0a0a0"></div>
<div class="r" style="left:222px;top:232px;width:691px;height:1px;background:#fff"></div>
<div class="t" style="right:1582px;top:246.46px;font-size:16px;line-height:16px;color:#000;text-align:right;letter-spacing:-0.25px">Tx Flow Control:</div>
<div class="r" style="left:343px;top:241px;width:543px;height:26px;background:#fff;border:1px solid #a0a0a0;box-sizing:border-box"></div>
<div class="t" style="left:346px;top:246.96px;font-size:16px;line-height:16px;color:#000;">off</div>
<div class="t" style="right:1582px;top:280.46px;font-size:16px;line-height:16px;color:#000;text-align:right;letter-spacing:-0.15px">Rx Flow Control:</div>
<div class="r" style="left:343px;top:275px;width:543px;height:26px;background:#fff;border:1px solid #a0a0a0;box-sizing:border-box"></div>
<div class="t" style="left:346px;top:280.96px;font-size:16px;line-height:16px;color:#000;">off</div>
<div class="r" style="left:887px;top:241px;width:25px;height:26px;background:#f0f0f0;border:1px solid #a0a0a0;box-sizing:border-box;box-shadow:inset 1px 1px 0 #fff,1px 1px 0 #fff"></div>
<svg class="r" style="left:887px;top:241px;" width="25" height="26" viewBox="0 0 25 26"><rect x="7" y="6" width="11" height="1.3" fill="#000"/><path d="M10.2 10 H15 V13.2 H18 L12.5 19 L7 13.2 H10.2 Z" fill="#000"/></svg>
<div class="r" style="left:887px;top:275px;width:25px;height:26px;background:#f0f0f0;border:1px solid #a0a0a0;box-sizing:border-box;box-shadow:inset 1px 1px 0 #fff,1px 1px 0 #fff"></div>
<svg class="r" style="left:887px;top:275px;" width="25" height="26" viewBox="0 0 25 26"><rect x="7" y="6" width="11" height="1.3" fill="#000"/><path d="M10.2 10 H15 V13.2 H18 L12.5 19 L7 13.2 H10.2 Z" fill="#000"/></svg>
<div class="r" style="left:222px;top:311px;width:691px;height:1px;background:#a0a0a0"></div>
<div class="r" style="left:222px;top:312px;width:691px;height:1px;background:#fff"></div>
<div class="t" style="right:1582px;top:327.46px;font-size:16px;line-height:16px;color:#000;text-align:right;">Advertise:</div>
<div class="r" style="left:343px;top:325px;width:18px;height:18px;background:#fff;border:1px solid #a0a0a0;box-sizing:border-box;box-shadow:0 0 0 1px #fcfcfc"></div>
<svg class="r" style="left:343px;top:325px;" width="18" height="18" viewBox="0 0 18 18"><path d="M4 6.6 L7.5 10 L14 3.4 L14.2 9 L7.5 15.2 L4 12 Z" fill="#000"/></svg>
<div class="t" style="left:366.5px;top:327.46px;font-size:16px;line-height:16px;color:#000;">10M half</div>
<div class="r" style="left:460px;top:325px;width:18px;height:18px;background:#fff;border:1px solid #a0a0a0;box-sizing:border-box;box-shadow:0 0 0 1px #fcfcfc"></div>
<svg class="r" style="left:460px;top:325px;" width="18" height="18" viewBox="0 0 18 18"><path d="M4 6.6 L7.5 10 L14 3.4 L14.2 9 L7.5 15.2 L4 12 Z" fill="#000"/></svg>
<div class="t" style="left:483.5px;top:327.46px;font-size:16px;line-height:16px;color:#000;">10M full</div>
<div class="r" style="left:343px;top:359px;width:18px;height:18px;background:#fff;border:1px solid #a0a0a0;box-sizing:border-box;box-shadow:0 0 0 1px #fcfcfc"></div>
<svg class="r" style="left:343px;top:359px;" width="18" height="18" viewBox="0 0 18 18"><path d="M4 6.6 L7.5 10 L14 3.4 L14.2 9 L7.5 15.2 L4 12 Z" fill="#000"/></svg>
<div class="t" style="left:366.5px;top:361.46px;font-size:16px;line-height:16px;color:#000;">100M half</div>
<div class="r" style="left:460px;top:359px;width:18px;height:18px;background:#fff;border:1px solid #a0a0a0;box-sizing:border-box;box-shadow:0 0 0 1px #fcfcfc"></div>
<svg class="r" style="left:460px;top:359px;" width="18" height="18" viewBox="0 0 18 18"><path d="M4 6.6 L7.5 10 L14 3.4 L14.2 9 L7.5 15.2 L4 12 Z" fill="#000"/></svg>
<div class="t" style="left:483.5px;top:361.46px;font-size:16px;line-height:16px;color:#000;">100M full</div>
<div class="r" style="left:343px;top:393px;width:18px;height:18px;background:#fff;border:1px solid #a0a0a0;box-sizing:border-box;box-shadow:0 0 0 1px #fcfcfc"></div>
<svg class="r" style="left:343px;top:393px;" width="18" height="18" viewBox="0 0 18 18"><path d="M4 6.6 L7.5 10 L14 3.4 L14.2 9 L7.5 15.2 L4 12 Z" fill="#000"/></svg>
<div class="t" style="left:366.5px;top:395.46px;font-size:16px;line-height:16px;color:#000;">1000M half</div>
<div class="r" style="left:460px;top:393px;width:18px;height:18px;background:#fff;border:1px solid #a0a0a0;box-sizing:border-box;box-shadow:0 0 0 1px #fcfcfc"></div>
<svg class="r" style="left:460px;top:393px;" width="18" height="18" viewBox="0 0 18 18"><path d="M4 6.6 L7.5 10 L14 3.4 L14.2 9 L7.5 15.2 L4 12 Z" fill="#000"/></svg>
<div class="t" style="left:483.5px;top:395.46px;font-size:16px;line-height:16px;color:#000;">1000M full</div>
<div class="r" style="left:343px;top:427px;width:18px;height:18px;background:#fff;border:1px solid #a0a0a0;box-sizing:border-box;box-shadow:0 0 0 1px #fcfcfc"></div>
<div class="t" style="left:366.5px;top:429.46px;font-size:16px;line-height:16px;color:#000;">10G full</div>
<div class="r" style="left:460px;top:427px;width:18px;height:18px;background:#fff;border:1px solid #a0a0a0;box-sizing:border-box;box-shadow:0 0 0 1px #fcfcfc"></div>
<div class="t" style="left:483.5px;top:429.46px;font-size:16px;line-height:16px;color:#000;">2.5G full</div>
<div class="r" style="left:343px;top:461px;width:18px;height:18px;background:#fff;border:1px solid #a0a0a0;box-sizing:border-box;box-shadow:0 0 0 1px #fcfcfc"></div>
<div class="t" style="left:366.5px;top:463.46px;font-size:16px;line-height:16px;color:#000;">5G full</div>
<div class="r" style="left:347px;top:451px;width:320px;height:31px;background:rgba(200,210,225,0.13)"></div>
<div class="r" style="left:347px;top:451px;width:32px;height:31px;background:rgba(235,245,255,0.25)"></div>
<div class="t" style="left:388px;top:460.61px;font-size:17px;line-height:17px;color:rgba(150,150,150,0.09);">Fenster ausschneiden</div>
<div class="r" style="left:939px;top:156px;width:169px;height:33px;background:#fff"></div>
<div class="r" style="left:939px;top:156px;width:168px;height:32px;background:#f0f0f0;border:1px solid #000;box-sizing:border-box;box-shadow:inset 1px 1px 0 #fff"></div>
<div class="t" style="left:939px;width:168px;top:164.96px;font-size:16px;line-height:16px;color:#000;text-align:center;">OK</div>
<div class="r" style="left:939px;top:191px;width:169px;height:33px;background:#fff"></div>
<div class="r" style="left:939px;top:191px;width:168px;height:32px;background:#f0f0f0;border:1px solid #8a8a8a;box-sizing:border-box;box-shadow:inset 1px 1px 0 #fff"></div>
<div class="t" style="left:939px;width:168px;top:199.96px;font-size:16px;line-height:16px;color:#000;text-align:center;">Cancel</div>
<div class="r" style="left:939px;top:226px;width:169px;height:33px;background:#fff"></div>
<div class="r" style="left:939px;top:226px;width:168px;height:32px;background:#f0f0f0;border:1px solid #8a8a8a;box-sizing:border-box;box-shadow:inset 1px 1px 0 #fff"></div>
<div class="t" style="left:939px;width:168px;top:234.96px;font-size:16px;line-height:16px;color:#000;text-align:center;">Apply</div>
<div class="r" style="left:939px;top:267px;width:169px;height:33px;background:#fff"></div>
<div class="r" style="left:939px;top:267px;width:168px;height:32px;background:#f0f0f0;border:1px solid #8a8a8a;box-sizing:border-box;box-shadow:inset 1px 1px 0 #fff"></div>
<div class="t" style="left:939px;width:168px;top:275.96px;font-size:16px;line-height:16px;color:#000;text-align:center;">Disable</div>
<div class="r" style="left:939px;top:302px;width:169px;height:33px;background:#fff"></div>
<div class="r" style="left:939px;top:302px;width:168px;height:32px;background:#f0f0f0;border:1px solid #8a8a8a;box-sizing:border-box;box-shadow:inset 1px 1px 0 #fff"></div>
<div class="t" style="left:939px;width:168px;top:310.96px;font-size:16px;line-height:16px;color:#000;text-align:center;">Comment</div>
<div class="r" style="left:939px;top:337px;width:169px;height:33px;background:#fff"></div>
<div class="r" style="left:939px;top:337px;width:168px;height:32px;background:#f0f0f0;border:1px solid #8a8a8a;box-sizing:border-box;box-shadow:inset 1px 1px 0 #fff"></div>
<div class="t" style="left:939px;width:168px;top:345.96px;font-size:16px;line-height:16px;color:#000;text-align:center;">Torch</div>
<div class="r" style="left:939px;top:378px;width:169px;height:33px;background:#fff"></div>
<div class="r" style="left:939px;top:378px;width:168px;height:32px;background:#f0f0f0;border:1px solid #8a8a8a;box-sizing:border-box;box-shadow:inset 1px 1px 0 #fff"></div>
<div class="t" style="left:939px;width:168px;top:386.96px;font-size:16px;line-height:16px;color:#000;text-align:center;">Cable Test</div>
<div class="r" style="left:939px;top:413px;width:169px;height:33px;background:#fff"></div>
<div class="r" style="left:939px;top:413px;width:168px;height:32px;background:#f0f0f0;border:1px solid #8a8a8a;box-sizing:border-box;box-shadow:inset 1px 1px 0 #fff"></div>
<div class="t" style="left:939px;width:168px;top:421.96px;font-size:16px;line-height:16px;color:#000;text-align:center;">Blink</div>
<div class="r" style="left:939px;top:448px;width:169px;height:33px;background:#fff"></div>
<div class="r" style="left:939px;top:448px;width:168px;height:32px;background:#f0f0f0;border:1px solid #8a8a8a;box-sizing:border-box;box-shadow:inset 1px 1px 0 #fff"></div>
<div class="t" style="left:939px;width:168px;top:456.96px;font-size:16px;line-height:16px;color:#000;text-align:center;">Reset MAC Address</div>
<div class="r" style="left:939px;top:483px;width:169px;height:33px;background:#fff"></div>
<div class="r" style="left:939px;top:483px;width:168px;height:32px;background:#f0f0f0;border:1px solid #8a8a8a;box-sizing:border-box;box-shadow:inset 1px 1px 0 #fff"></div>
<div class="t" style="left:939px;width:168px;top:491.96px;font-size:16px;line-height:16px;color:#000;text-align:center;">Reset Counters</div>
<div class="r" style="left:212px;top:963px;width:182px;height:28px;background:#f0f0f0"></div>
<div class="r" style="left:212px;top:963px;width:182px;height:1px;background:#a0a0a0"></div>
<div class="r" style="left:212px;top:963px;width:1px;height:28px;background:#a0a0a0"></div>
<div class="r" style="left:213px;top:990px;width:181px;height:1px;background:#fff"></div>
<div class="r" style="left:393px;top:964px;width:1px;height:27px;background:#fff"></div>
<div class="t" style="left:215px;top:969.96px;font-size:16px;line-height:16px;color:#000;">enabled</div>
<div class="r" style="left:397px;top:963px;width:184px;height:28px;background:#f0f0f0"></div>
<div class="r" style="left:397px;top:963px;width:184px;height:1px;background:#a0a0a0"></div>
<div class="r" style="left:397px;top:963px;width:1px;height:28px;background:#a0a0a0"></div>
<div class="r" style="left:398px;top:990px;width:183px;height:1px;background:#fff"></div>
<div class="r" style="left:580px;top:964px;width:1px;height:27px;background:#fff"></div>
<div class="r" style="left:583px;top:963px;width:184px;height:28px;background:#f0f0f0"></div>
<div class="r" style="left:583px;top:963px;width:184px;height:1px;background:#a0a0a0"></div>
<div class="r" style="left:583px;top:963px;width:1px;height:28px;background:#a0a0a0"></div>
<div class="r" style="left:584px;top:990px;width:183px;height:1px;background:#fff"></div>
<div class="r" style="left:766px;top:964px;width:1px;height:27px;background:#fff"></div>
<div class="t" style="left:586px;top:969.96px;font-size:16px;line-height:16px;color:#000;">running</div>
<div class="r" style="left:769px;top:963px;width:184px;height:28px;background:#f0f0f0"></div>
<div class="r" style="left:769px;top:963px;width:184px;height:1px;background:#a0a0a0"></div>
<div class="r" style="left:769px;top:963px;width:1px;height:28px;background:#a0a0a0"></div>
<div class="r" style="left:770px;top:990px;width:183px;height:1px;background:#fff"></div>
<div class="r" style="left:952px;top:964px;width:1px;height:27px;background:#fff"></div>
<div class="t" style="left:772px;top:969.96px;font-size:16px;line-height:16px;color:#000;">slave</div>
<div class="r" style="left:955px;top:963px;width:159px;height:28px;background:#f0f0f0"></div>
<div class="r" style="left:955px;top:963px;width:159px;height:1px;background:#a0a0a0"></div>
<div class="r" style="left:955px;top:963px;width:1px;height:28px;background:#a0a0a0"></div>
<div class="r" style="left:956px;top:990px;width:158px;height:1px;background:#fff"></div>
<div class="r" style="left:1113px;top:964px;width:1px;height:27px;background:#fff"></div>
<div class="t" style="left:958px;top:969.96px;font-size:16px;line-height:16px;color:#000;">link ok</div>
<div class="r" style="left:1133px;top:172px;width:687px;height:743px;background:#000"></div>
<div class="r" style="left:1134px;top:173px;width:685px;height:741px;background:#f0f0f0"></div>
<div class="r" style="left:1134px;top:173px;width:685px;height:29px;background:#4f50cc"></div>
<div class="r" style="left:1134px;top:173px;width:685px;height:1px;background:rgba(255,255,255,0.35)"></div>
<div class="r" style="left:1134px;top:174px;width:1px;height:28px;background:rgba(255,255,255,0.35)"></div>
<div class="r" style="left:1134px;top:202px;width:1px;height:712px;background:#f8f8f8"></div>
<div class="t" style="left:1139px;top:182.46px;font-size:16px;line-height:16px;color:#fff;">Ping</div>
<div class="r" style="left:1770px;top:178px;width:22px;height:21px;background:#e9e7e9;border:1px solid #383838;box-sizing:border-box;box-shadow:inset 1px 1px 0 #fff"></div>
<div class="r" style="left:1793px;top:178px;width:22px;height:21px;background:#e9e7e9;border:1px solid #383838;box-sizing:border-box;box-shadow:inset 1px 1px 0 #fff"></div>
<svg class="r" style="left:1770px;top:178px;" width="22" height="21" viewBox="0 0 22 21"><rect x="4.5" y="4.5" width="13" height="13" fill="none" stroke="#333" stroke-width="1"/><rect x="4" y="4" width="14" height="3" fill="#333"/></svg>
<svg class="r" style="left:1793px;top:178px;" width="22" height="21" viewBox="0 0 22 21"><path d="M6.3 6.5 L15.7 15.7 M15.7 6.5 L6.3 15.7" stroke="#333" stroke-width="2.1" stroke-linecap="round"/><rect x="9.5" y="9.6" width="3" height="3" fill="#333"/></svg>
<div class="r" style="left:1137px;top:239px;width:539px;height:218px;background:#f0f0f0"></div>
<div class="r" style="left:1137px;top:239px;width:539px;height:1px;background:#fff"></div>
<div class="r" style="left:1137px;top:239px;width:1px;height:218px;background:#fff"></div>
<div class="r" style="left:1675px;top:239px;width:1px;height:218px;background:#a0a0a0"></div>
<div class="r" style="left:1137px;top:456px;width:539px;height:1px;background:#a0a0a0"></div>
<div class="r" style="left:1138px;top:204px;width:77px;height:36px;background:#f0f0f0"></div>
<div class="r" style="left:1138px;top:204px;width:77px;height:1px;background:#fff"></div>
<div class="r" style="left:1138px;top:204px;width:1px;height:36px;background:#fff"></div>
<div class="r" style="left:1214px;top:204px;width:1px;height:36px;background:#a0a0a0"></div>
<div class="t" style="left:1138px;width:77px;top:215.46px;font-size:16px;line-height:16px;color:#000;text-align:center;">General</div>
<div class="r" style="left:1215px;top:208px;width:85px;height:31px;background:#d9d9d9"></div>
<div class="r" style="left:1215px;top:208px;width:85px;height:1px;background:#e6e6e6"></div>
<div class="r" style="left:1215px;top:208px;width:1px;height:31px;background:#fff"></div>
<div class="r" style="left:1299px;top:208px;width:1px;height:31px;background:#a0a0a0"></div>
<div class="t" style="left:1215px;width:85px;top:217.46px;font-size:16px;line-height:16px;color:#000;text-align:center;">Advanced</div>
<div class="r" style="left:1139px;top:239px;width:75px;height:1px;background:#f0f0f0"></div>
<div class="t" style="right:672px;top:255.96px;font-size:16px;line-height:16px;color:#000;text-align:right;">Ping To:</div>
<div class="r" style="left:1253px;top:250px;width:412px;height:26px;background:#fff;border:1px solid #a0a0a0;box-sizing:border-box"></div>
<div class="r" style="left:1256px;top:252px;width:104px;height:22px;background:#0078d7"></div>
<div class="t" style="left:1257.5px;top:255.96px;font-size:16px;line-height:16px;color:#fff;">192.168.88.21</div>
<div class="r" style="left:1359px;top:252px;width:1px;height:22px;background:#000"></div>
<div class="t" style="right:672px;top:289.96px;font-size:16px;line-height:16px;color:#000;text-align:right;">Interface:</div>
<div class="r" style="left:1253px;top:284px;width:385px;height:26px;background:#f0f0f0;border:1px solid #a0a0a0;box-sizing:border-box;box-shadow:0 0 0 1px #fff,inset 1px 1px 0 #fff"></div>
<svg class="r" style="left:1643px;top:291px;" width="16" height="12" viewBox="0 0 16 12"><path d="M1.6 2.9 H15.1 L8.35 10.1Z" fill="#000"/></svg>
<div class="r" style="left:1253px;top:322px;width:18px;height:18px;background:#fff;border:1px solid #a0a0a0;box-sizing:border-box;box-shadow:0 0 0 1px #fcfcfc"></div>
<div class="t" style="left:1275.5px;top:324.46px;font-size:16px;line-height:16px;color:#000;">ARP Ping</div>
<div class="t" style="right:672px;top:357.96px;font-size:16px;line-height:16px;color:#000;text-align:right;">Packet Count:</div>
<div class="r" style="left:1253px;top:352px;width:385px;height:26px;background:#f0f0f0;border:1px solid #a0a0a0;box-sizing:border-box;box-shadow:0 0 0 1px #fff,inset 1px 1px 0 #fff"></div>
<svg class="r" style="left:1643px;top:359px;" width="16" height="12" viewBox="0 0 16 12"><path d="M1.6 2.9 H15.1 L8.35 10.1Z" fill="#000"/></svg>
<div class="t" style="right:672px;top:391.96px;font-size:16px;line-height:16px;color:#000;text-align:right;">Timeout:</div>
<div class="r" style="left:1253px;top:386px;width:384px;height:26px;background:#fff;border:1px solid #a0a0a0;box-sizing:border-box"></div>
<div class="t" style="left:1257.5px;top:391.96px;font-size:16px;line-height:16px;color:#000;">1000</div>
<div class="t" style="left:1641px;top:391.96px;font-size:16px;line-height:16px;color:#000;">ms</div>
<div class="r" style="left:1684px;top:211px;width:124px;height:33px;background:#fff"></div>
<div class="r" style="left:1684px;top:211px;width:123px;height:32px;background:#f0f0f0;border:1px solid #000;box-sizing:border-box;box-shadow:inset 1px 1px 0 #fff"></div>
<div class="t" style="left:1684px;width:123px;top:219.96px;font-size:16px;line-height:16px;color:#000;text-align:center;">Start</div>
<div class="r" style="left:1684px;top:246px;width:124px;height:33px;background:#fff"></div>
<div class="r" style="left:1684px;top:246px;width:123px;height:32px;background:#f0f0f0;border:1px solid #8a8a8a;box-sizing:border-box;box-shadow:inset 1px 1px 0 #fff"></div>
<div class="t" style="left:1684px;width:123px;top:254.96px;font-size:16px;line-height:16px;color:#000;text-align:center;">Stop</div>
<div class="r" style="left:1684px;top:281px;width:124px;height:33px;background:#fff"></div>
<div class="r" style="left:1684px;top:281px;width:123px;height:32px;background:#f0f0f0;border:1px solid #8a8a8a;box-sizing:border-box;box-shadow:inset 1px 1px 0 #fff"></div>
<div class="t" style="left:1684px;width:123px;top:289.96px;font-size:16px;line-height:16px;color:#000;text-align:center;">Close</div>
<div class="r" style="left:1684px;top:316px;width:124px;height:33px;background:#fff"></div>
<div class="r" style="left:1684px;top:316px;width:123px;height:32px;background:#f0f0f0;border:1px solid #8a8a8a;box-sizing:border-box;box-shadow:inset 1px 1px 0 #fff"></div>
<div class="t" style="left:1684px;width:123px;top:324.96px;font-size:16px;line-height:16px;color:#000;text-align:center;">New Window</div>
<div class="r" style="left:1136px;top:465px;width:680px;height:396px;background:#fff"></div>
<div class="r" style="left:1136px;top:465px;width:680px;height:27px;background:#f0f0f0;border:1px solid #a0a0a0;box-sizing:border-box"></div>
<div class="r" style="left:1203px;top:466px;width:1px;height:26px;background:#a0a0a0"></div>
<div class="r" style="left:1428px;top:466px;width:1px;height:26px;background:#a0a0a0"></div>
<div class="r" style="left:1503px;top:466px;width:1px;height:26px;background:#a0a0a0"></div>
<div class="r" style="left:1593px;top:466px;width:1px;height:26px;background:#a0a0a0"></div>
<div class="r" style="left:1645px;top:466px;width:1px;height:26px;background:#a0a0a0"></div>
<div class="r" style="left:1792px;top:466px;width:1px;height:26px;background:#a0a0a0"></div>
<div class="t" style="left:1139px;top:472.46px;font-size:16px;line-height:16px;color:#000;">Seq #</div>
<div class="t" style="left:1206px;top:472.46px;font-size:16px;line-height:16px;color:#000;">Host</div>
<div class="t" style="left:1431px;top:472.46px;font-size:16px;line-height:16px;color:#000;">Time</div>
<div class="t" style="left:1506px;top:472.46px;font-size:16px;line-height:16px;color:#000;">Reply Size</div>
<div class="t" style="left:1596px;top:472.46px;font-size:16px;line-height:16px;color:#000;">TTL</div>
<div class="t" style="left:1648px;top:472.46px;font-size:16px;line-height:16px;color:#000;">Status</div>
<svg class="r" style="left:1186px;top:471px;" width="14" height="13" viewBox="0 0 14 13"><path d="M1.5 11.5 L7 1.5 L12.5 11.5Z" fill="none" stroke="#c8c8c8" stroke-width="1"/></svg>
<svg class="r" style="left:1793px;top:466px;" width="22" height="25" viewBox="0 0 22 25"><path d="M4.5 9 H17.5 L11 16Z" fill="#000"/></svg>
<div class="r" style="left:1203px;top:492px;width:1px;height:369px;background:#e3e3e3"></div>
<div class="r" style="left:1428px;top:492px;width:1px;height:369px;background:#e3e3e3"></div>
<div class="r" style="left:1503px;top:492px;width:1px;height:369px;background:#e3e3e3"></div>
<div class="r" style="left:1593px;top:492px;width:1px;height:369px;background:#e3e3e3"></div>
<div class="r" style="left:1645px;top:492px;width:1px;height:369px;background:#e3e3e3"></div>
<div class="r" style="left:1136px;top:496px;width:656px;height:1px;background:#e3e3e3"></div>
<div class="r" style="left:1136px;top:519px;width:656px;height:1px;background:#e3e3e3"></div>
<div class="t" style="right:719px;top:499.96px;font-size:16px;line-height:16px;color:#000;text-align:right;">74684</div>
<div class="t" style="left:1206px;top:499.96px;font-size:16px;line-height:16px;color:#000;">192.168.88.21</div>
<div class="t" style="left:1431px;top:499.96px;font-size:16px;line-height:16px;color:#000;">0ms</div>
<div class="t" style="right:329px;top:499.96px;font-size:16px;line-height:16px;color:#000;text-align:right;">50</div>
<div class="t" style="right:277px;top:499.96px;font-size:16px;line-height:16px;color:#000;text-align:right;">64</div>
<div class="r" style="left:1136px;top:542px;width:656px;height:1px;background:#e3e3e3"></div>
<div class="t" style="right:719px;top:522.96px;font-size:16px;line-height:16px;color:#000;text-align:right;">74685</div>
<div class="t" style="left:1206px;top:522.96px;font-size:16px;line-height:16px;color:#000;">192.168.88.21</div>
<div class="t" style="left:1431px;top:522.96px;font-size:16px;line-height:16px;color:#000;">0ms</div>
<div class="t" style="right:329px;top:522.96px;font-size:16px;line-height:16px;color:#000;text-align:right;">50</div>
<div class="t" style="right:277px;top:522.96px;font-size:16px;line-height:16px;color:#000;text-align:right;">64</div>
<div class="r" style="left:1136px;top:565px;width:656px;height:1px;background:#e3e3e3"></div>
<div class="t" style="right:719px;top:545.96px;font-size:16px;line-height:16px;color:#000;text-align:right;">74686</div>
<div class="t" style="left:1206px;top:545.96px;font-size:16px;line-height:16px;color:#000;">192.168.88.21</div>
<div class="t" style="left:1431px;top:545.96px;font-size:16px;line-height:16px;color:#000;">0ms</div>
<div class="t" style="right:329px;top:545.96px;font-size:16px;line-height:16px;color:#000;text-align:right;">50</div>
<div class="t" style="right:277px;top:545.96px;font-size:16px;line-height:16px;color:#000;text-align:right;">64</div>
<div class="r" style="left:1136px;top:588px;width:656px;height:1px;background:#e3e3e3"></div>
<div class="t" style="right:719px;top:568.96px;font-size:16px;line-height:16px;color:#000;text-align:right;">74687</div>
<div class="t" style="left:1206px;top:568.96px;font-size:16px;line-height:16px;color:#000;">192.168.88.21</div>
<div class="t" style="left:1431px;top:568.96px;font-size:16px;line-height:16px;color:#000;">timeout</div>
<div class="t" style="left:1648px;top:568.96px;font-size:16px;line-height:16px;color:#000;">timeout</div>
<div class="r" style="left:1136px;top:611px;width:656px;height:1px;background:#e3e3e3"></div>
<div class="t" style="right:719px;top:591.96px;font-size:16px;line-height:16px;color:#000;text-align:right;">74688</div>
<div class="t" style="left:1206px;top:591.96px;font-size:16px;line-height:16px;color:#000;">192.168.88.21</div>
<div class="t" style="left:1431px;top:591.96px;font-size:16px;line-height:16px;color:#000;">timeout</div>
<div class="t" style="left:1648px;top:591.96px;font-size:16px;line-height:16px;color:#000;">timeout</div>
<div class="r" style="left:1136px;top:634px;width:656px;height:1px;background:#e3e3e3"></div>
<div class="t" style="right:719px;top:614.96px;font-size:16px;line-height:16px;color:#000;text-align:right;">74689</div>
<div class="t" style="left:1206px;top:614.96px;font-size:16px;line-height:16px;color:#000;">192.168.88.21</div>
<div class="t" style="left:1431px;top:614.96px;font-size:16px;line-height:16px;color:#000;">timeout</div>
<div class="t" style="left:1648px;top:614.96px;font-size:16px;line-height:16px;color:#000;">timeout</div>
<div class="r" style="left:1136px;top:657px;width:656px;height:1px;background:#e3e3e3"></div>
<div class="t" style="right:719px;top:637.96px;font-size:16px;line-height:16px;color:#000;text-align:right;">74690</div>
<div class="t" style="left:1206px;top:637.96px;font-size:16px;line-height:16px;color:#000;">192.168.88.21</div>
<div class="t" style="left:1431px;top:637.96px;font-size:16px;line-height:16px;color:#000;">0ms</div>
<div class="t" style="right:329px;top:637.96px;font-size:16px;line-height:16px;color:#000;text-align:right;">50</div>
<div class="t" style="right:277px;top:637.96px;font-size:16px;line-height:16px;color:#000;text-align:right;">64</div>
<div class="r" style="left:1136px;top:680px;width:656px;height:1px;background:#e3e3e3"></div>
<div class="t" style="right:719px;top:660.96px;font-size:16px;line-height:16px;color:#000;text-align:right;">74691</div>
<div class="t" style="left:1206px;top:660.96px;font-size:16px;line-height:16px;color:#000;">192.168.88.21</div>
<div class="t" style="left:1431px;top:660.96px;font-size:16px;line-height:16px;color:#000;">0ms</div>
<div class="t" style="right:329px;top:660.96px;font-size:16px;line-height:16px;color:#000;text-align:right;">50</div>
<div class="t" style="right:277px;top:660.96px;font-size:16px;line-height:16px;color:#000;text-align:right;">64</div>
<div class="r" style="left:1136px;top:703px;width:656px;height:1px;background:#e3e3e3"></div>
<div class="t" style="right:719px;top:683.96px;font-size:16px;line-height:16px;color:#000;text-align:right;">74692</div>
<div class="t" style="left:1206px;top:683.96px;font-size:16px;line-height:16px;color:#000;">192.168.88.21</div>
<div class="t" style="left:1431px;top:683.96px;font-size:16px;line-height:16px;color:#000;">0ms</div>
<div class="t" style="right:329px;top:683.96px;font-size:16px;line-height:16px;color:#000;text-align:right;">50</div>
<div class="t" style="right:277px;top:683.96px;font-size:16px;line-height:16px;color:#000;text-align:right;">64</div>
<div class="r" style="left:1136px;top:726px;width:656px;height:1px;background:#e3e3e3"></div>
<div class="t" style="right:719px;top:706.96px;font-size:16px;line-height:16px;color:#000;text-align:right;">74693</div>
<div class="t" style="left:1206px;top:706.96px;font-size:16px;line-height:16px;color:#000;">192.168.88.21</div>
<div class="t" style="left:1431px;top:706.96px;font-size:16px;line-height:16px;color:#000;">0ms</div>
<div class="t" style="right:329px;top:706.96px;font-size:16px;line-height:16px;color:#000;text-align:right;">50</div>
<div class="t" style="right:277px;top:706.96px;font-size:16px;line-height:16px;color:#000;text-align:right;">64</div>
<div class="r" style="left:1136px;top:749px;width:656px;height:1px;background:#e3e3e3"></div>
<div class="t" style="right:719px;top:729.96px;font-size:16px;line-height:16px;color:#000;text-align:right;">74694</div>
<div class="t" style="left:1206px;top:729.96px;font-size:16px;line-height:16px;color:#000;">192.168.88.21</div>
<div class="t" style="left:1431px;top:729.96px;font-size:16px;line-height:16px;color:#000;">0ms</div>
<div class="t" style="right:329px;top:729.96px;font-size:16px;line-height:16px;color:#000;text-align:right;">50</div>
<div class="t" style="right:277px;top:729.96px;font-size:16px;line-height:16px;color:#000;text-align:right;">64</div>
<div class="r" style="left:1136px;top:772px;width:656px;height:1px;background:#e3e3e3"></div>
<div class="t" style="right:719px;top:752.96px;font-size:16px;line-height:16px;color:#000;text-align:right;">74695</div>
<div class="t" style="left:1206px;top:752.96px;font-size:16px;line-height:16px;color:#000;">192.168.88.21</div>
<div class="t" style="left:1431px;top:752.96px;font-size:16px;line-height:16px;color:#000;">0ms</div>
<div class="t" style="right:329px;top:752.96px;font-size:16px;line-height:16px;color:#000;text-align:right;">50</div>
<div class="t" style="right:277px;top:752.96px;font-size:16px;line-height:16px;color:#000;text-align:right;">64</div>
<div class="r" style="left:1136px;top:795px;width:656px;height:1px;background:#e3e3e3"></div>
<div class="t" style="right:719px;top:775.96px;font-size:16px;line-height:16px;color:#000;text-align:right;">74696</div>
<div class="t" style="left:1206px;top:775.96px;font-size:16px;line-height:16px;color:#000;">192.168.88.21</div>
<div class="t" style="left:1431px;top:775.96px;font-size:16px;line-height:16px;color:#000;">timeout</div>
<div class="t" style="left:1648px;top:775.96px;font-size:16px;line-height:16px;color:#000;">timeout</div>
<div class="r" style="left:1136px;top:818px;width:656px;height:1px;background:#e3e3e3"></div>
<div class="t" style="right:719px;top:798.96px;font-size:16px;line-height:16px;color:#000;text-align:right;">74697</div>
<div class="t" style="left:1206px;top:798.96px;font-size:16px;line-height:16px;color:#000;">192.168.88.21</div>
<div class="t" style="left:1431px;top:798.96px;font-size:16px;line-height:16px;color:#000;">0ms</div>
<div class="t" style="right:329px;top:798.96px;font-size:16px;line-height:16px;color:#000;text-align:right;">50</div>
<div class="t" style="right:277px;top:798.96px;font-size:16px;line-height:16px;color:#000;text-align:right;">64</div>
<div class="r" style="left:1136px;top:841px;width:656px;height:1px;background:#e3e3e3"></div>
<div class="t" style="right:719px;top:821.96px;font-size:16px;line-height:16px;color:#000;text-align:right;">74698</div>
<div class="t" style="left:1206px;top:821.96px;font-size:16px;line-height:16px;color:#000;">192.168.88.21</div>
<div class="t" style="left:1431px;top:821.96px;font-size:16px;line-height:16px;color:#000;">0ms</div>
<div class="t" style="right:329px;top:821.96px;font-size:16px;line-height:16px;color:#000;text-align:right;">50</div>
<div class="t" style="right:277px;top:821.96px;font-size:16px;line-height:16px;color:#000;text-align:right;">64</div>
<div class="r" style="left:1136px;top:864px;width:656px;height:1px;background:#e3e3e3"></div>
<div class="t" style="right:719px;top:844.96px;font-size:16px;line-height:16px;color:#000;text-align:right;">74699</div>
<div class="t" style="left:1206px;top:844.96px;font-size:16px;line-height:16px;color:#000;">192.168.88.21</div>
<div class="t" style="left:1431px;top:844.96px;font-size:16px;line-height:16px;color:#000;">0ms</div>
<div class="t" style="right:329px;top:844.96px;font-size:16px;line-height:16px;color:#000;text-align:right;">50</div>
<div class="t" style="right:277px;top:844.96px;font-size:16px;line-height:16px;color:#000;text-align:right;">64</div>
<div class="r" style="left:1136px;top:860px;width:680px;height:1px;background:#a0a0a0"></div>
<div class="r" style="left:1136px;top:465px;width:1px;height:419px;background:#a0a0a0"></div>
<div class="r" style="left:1793px;top:492px;width:22px;height:21px;background:#f0f0f0;box-shadow:inset 1px 1px 0 #fff"></div>
<svg class="r" style="left:1793px;top:492px;" width="22" height="22" viewBox="0 0 22 22"><path d="M4.6 11.8 L10.3 5.6 L16 11.8 H12.9 V15 H7.9 V11.8 Z" fill="#000"/></svg>
<div class="r" style="left:1793px;top:513px;width:22px;height:1px;background:#a0a0a0"></div>
<div class="r" style="left:1793px;top:514px;width:22px;height:310px;background:#d4d4d4"></div>
<div class="r" style="left:1793px;top:824px;width:22px;height:1px;background:#a0a0a0"></div>
<div class="r" style="left:1793px;top:825px;width:22px;height:10px;background:#f0f0f0;box-shadow:inset 1px 1px 0 #fff"></div>
<div class="r" style="left:1793px;top:835px;width:22px;height:1px;background:#a0a0a0"></div>
<div class="r" style="left:1793px;top:836px;width:22px;height:1px;background:#e6e6e6"></div>
<div class="r" style="left:1793px;top:837px;width:22px;height:23px;background:#f0f0f0;box-shadow:inset 1px 1px 0 #fff"></div>
<svg class="r" style="left:1793px;top:837px;" width="22" height="22" viewBox="0 0 22 22"><path d="M8.2 8 H13 V11 H16.1 L10.5 17 L4.9 11 H8.2 Z" fill="#000"/></svg>
<div class="r" style="left:1792px;top:492px;width:1px;height:392px;background:#a0a0a0"></div>
<div class="r" style="left:1815px;top:492px;width:1px;height:392px;background:#c8c8c8"></div>
<div class="r" style="left:1137px;top:861px;width:22px;height:22px;background:#f0f0f0;box-shadow:inset 1px 1px 0 #fff"></div>
<svg class="r" style="left:1137px;top:861px;" width="22" height="22" viewBox="0 0 22 22"><path d="M15.1 7.7 H12.1 V4.7 L5.9 10.4 L12.1 16.1 V12.8 H15.1 Z" fill="#000"/></svg>
<div class="r" style="left:1159px;top:861px;width:1px;height:22px;background:#a0a0a0"></div>
<div class="r" style="left:1160px;top:861px;width:552px;height:22px;background:#f0f0f0;box-shadow:inset 1px 1px 0 #fff"></div>
<div class="r" style="left:1712px;top:861px;width:57px;height:22px;background:#d4d4d4"></div>
<div class="r" style="left:1769px;top:861px;width:1px;height:22px;background:#a0a0a0"></div>
<div class="r" style="left:1770px;top:861px;width:22px;height:22px;background:#f0f0f0;box-shadow:inset 1px 1px 0 #fff"></div>
<svg class="r" style="left:1770px;top:861px;" width="22" height="22" viewBox="0 0 22 22"><path d="M6.9 7.7 H9.9 V4.7 L16.1 10.4 L9.9 16.1 V12.8 H6.9 Z" fill="#000"/></svg>
<div class="r" style="left:1793px;top:861px;width:22px;height:22px;background:#f0f0f0;box-shadow:inset 1px 1px 0 #fff"></div>
<div class="r" style="left:1137px;top:883px;width:679px;height:1px;background:#a0a0a0"></div>
<div class="r" style="left:1136px;top:884px;width:80px;height:28px;background:#f0f0f0"></div>
<div class="r" style="left:1136px;top:884px;width:80px;height:1px;background:#a0a0a0"></div>
<div class="r" style="left:1136px;top:884px;width:1px;height:28px;background:#a0a0a0"></div>
<div class="r" style="left:1137px;top:911px;width:79px;height:1px;background:#fff"></div>
<div class="r" style="left:1215px;top:885px;width:1px;height:27px;background:#fff"></div>
<div class="t" style="left:1140px;top:891.46px;font-size:16px;line-height:16px;color:#000;">1000 ite...</div>
<div class="r" style="left:1218px;top:884px;width:157px;height:28px;background:#f0f0f0"></div>
<div class="r" style="left:1218px;top:884px;width:157px;height:1px;background:#a0a0a0"></div>
<div class="r" style="left:1218px;top:884px;width:1px;height:28px;background:#a0a0a0"></div>
<div class="r" style="left:1219px;top:911px;width:156px;height:1px;background:#fff"></div>
<div class="r" style="left:1374px;top:885px;width:1px;height:27px;background:#fff"></div>
<div class="t" style="left:1222px;top:891.46px;font-size:16px;line-height:16px;color:#000;">69911 of 74705 pa...</div>
<div class="r" style="left:1376px;top:884px;width:142px;height:28px;background:#f0f0f0"></div>
<div class="r" style="left:1376px;top:884px;width:142px;height:1px;background:#a0a0a0"></div>
<div class="r" style="left:1376px;top:884px;width:1px;height:28px;background:#a0a0a0"></div>
<div class="r" style="left:1377px;top:911px;width:141px;height:1px;background:#fff"></div>
<div class="r" style="left:1517px;top:885px;width:1px;height:27px;background:#fff"></div>
<div class="t" style="left:1380px;top:891.46px;font-size:16px;line-height:16px;color:#000;">6% packet loss</div>
<div class="r" style="left:1519px;top:884px;width:96px;height:28px;background:#f0f0f0"></div>
<div class="r" style="left:1519px;top:884px;width:96px;height:1px;background:#a0a0a0"></div>
<div class="r" style="left:1519px;top:884px;width:1px;height:28px;background:#a0a0a0"></div>
<div class="r" style="left:1520px;top:911px;width:95px;height:1px;background:#fff"></div>
<div class="r" style="left:1614px;top:885px;width:1px;height:27px;background:#fff"></div>
<div class="t" style="left:1523px;top:891.46px;font-size:16px;line-height:16px;color:#000;">Min: 0 ms</div>
<div class="r" style="left:1616px;top:884px;width:96px;height:28px;background:#f0f0f0"></div>
<div class="r" style="left:1616px;top:884px;width:96px;height:1px;background:#a0a0a0"></div>
<div class="r" style="left:1616px;top:884px;width:1px;height:28px;background:#a0a0a0"></div>
<div class="r" style="left:1617px;top:911px;width:95px;height:1px;background:#fff"></div>
<div class="r" style="left:1711px;top:885px;width:1px;height:27px;background:#fff"></div>
<div class="t" style="left:1620px;top:891.46px;font-size:16px;line-height:16px;color:#000;">Avg: 0 ms</div>
<div class="r" style="left:1713px;top:884px;width:102px;height:28px;background:#f0f0f0"></div>
<div class="r" style="left:1713px;top:884px;width:102px;height:1px;background:#a0a0a0"></div>
<div class="r" style="left:1713px;top:884px;width:1px;height:28px;background:#a0a0a0"></div>
<div class="r" style="left:1714px;top:911px;width:101px;height:1px;background:#fff"></div>
<div class="r" style="left:1814px;top:885px;width:1px;height:27px;background:#fff"></div>
<div class="t" style="left:1717px;top:891.46px;font-size:16px;line-height:16px;color:#000;">Max: 988 ms</div>
</body></html>
